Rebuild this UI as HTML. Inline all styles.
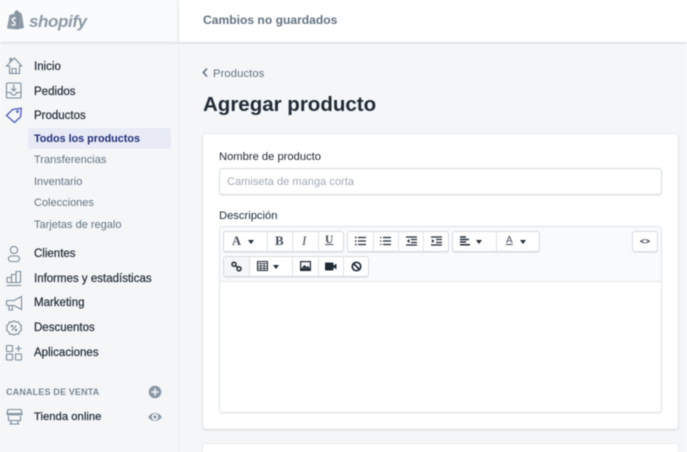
<!DOCTYPE html>
<html lang="es"><head><meta charset="utf-8"><style>
html,body{margin:0;padding:0;width:687px;height:452px;overflow:hidden}
#p{position:absolute;left:0;top:0;width:687px;height:452px;overflow:hidden;background:#f4f6f8;font-family:"Liberation Sans",sans-serif;color:#212b36;filter:blur(.4px)}
.t{position:absolute;white-space:nowrap;line-height:16px;font-size:11.500px;color:#212b36;-webkit-text-stroke:.2px currentColor}
.n{left:34px}
.s{left:34px;color:#637381;font-size:11px;letter-spacing:0;-webkit-text-stroke:0}
svg{position:absolute;fill:none;stroke:#7c8b99;stroke-width:1.100}
.box{position:absolute;background:#fff;box-sizing:border-box}
.g{position:absolute;background:#fff;border:1px solid #d5dbe1;border-radius:3px;box-sizing:border-box;height:21px;box-shadow:0 1px 0 #e3e6ea}
.d{position:absolute;top:0;bottom:0;width:1px;background:#dfe3e8}
.c{position:absolute;top:240px;width:0;height:0;border:3.500px solid transparent;border-top:4px solid #212b36;border-bottom:0}
</style></head><body><div id="p">

<div class="box" style="left:0;top:0;width:178px;height:42px;background:#fafbfc;box-shadow:0 1px 2px rgba(60,70,80,.18)"></div>
<div class="box" style="left:178px;top:0;width:509px;height:42px;box-shadow:0 1px 2px rgba(60,70,80,.18)"></div>
<div class="box" style="left:178px;top:0;width:1px;height:452px;background:#e9ecef"></div>

<svg style="left:6px;top:8px" width="20" height="24" viewBox="0 0 20 24"><path d="M1 20.500L3.500 7c3-1 3.500-1 4.500-1C9 2 11 1 12.500 3.500L15 5l1 2 2 13-7 1.500z" fill="#8d9aa6" stroke="none"/><path d="M11.500 4v17" stroke="#74838f" stroke-width=".7"/><path d="M10 10.500c-2-1-4 0-3.500 1.500S9.500 14 9 16s-2.500 1-3.500.5" stroke="#fafbfc" stroke-width="1.400"/></svg>
<div class="t" style="left:29px;top:12px;font-size:17px;line-height:20px;font-weight:700;font-style:italic;color:#8d9aa6;letter-spacing:-.4px;-webkit-text-stroke:0">shopify</div>
<div class="t" style="left:203px;top:12px;font-size:12.100px;color:#637381;font-weight:700;-webkit-text-stroke:0">Cambios no guardados</div>

<svg style="left:5px;top:57px" width="18" height="18" viewBox="0 0 18 18"><path d="M1.500 9L5 5.500V1.500h1.500v2.500L9.500 1l7 8h-2v7.500h-10V9z"/><path d="M7 16.500v-5h4v5"/></svg>
<svg style="left:5px;top:81px" width="18" height="18" viewBox="0 0 18 18"><rect x="1.500" y="2" width="14.500" height="15" rx="1"/><path d="M1.500 11.500H6c0 2 1.200 2.500 2.700 2.500s2.700-.5 2.700-2.500H16M8.700 3.500v6M6.200 7.500l2.500 2.500 2.500-2.500"/></svg>
<svg style="left:5px;top:106px" width="18" height="18" viewBox="0 0 18 18"><path d="M1.500 9.500L7.500 3.500 16.300 2.300 15.500 11 9.500 16.500z" stroke="#4f5dbd" stroke-width="1.300"/><circle cx="12.500" cy="5.500" r=".8" stroke="#4f5dbd"/></svg>
<svg style="left:6px;top:245px" width="16" height="18" viewBox="0 0 16 18"><circle cx="8" cy="5" r="3.600"/><rect x="2.500" y="11" width="11" height="5.500" rx="2.700"/></svg>
<svg style="left:5px;top:270px" width="18" height="17" viewBox="0 0 18 17"><path d="M2 12.500V7.500h4.500v5M6.500 12.500V4.500h4.500v8M11 12.500V1.500h4.500v11M2 12.500h13.500M1.500 15.500h14.500"/></svg>
<svg style="left:5px;top:295px" width="18" height="17" viewBox="0 0 18 17"><path d="M16.500 1.500v13L9 10.500H2.500a1 1 0 0 1-1-1v-3a1 1 0 0 1 1-1H9zM4 10.500v4.500h3.500l-.5-4.500"/></svg>
<svg style="left:5px;top:319px" width="18" height="18" viewBox="0 0 18 18"><path d="M9 1.800l2 1.300 2.500-.2 1 2.300 2 1.500-.7 2.300.7 2.300-2 1.500-1 2.300-2.500-.2-2 1.300-2-1.300-2.500.2-1-2.300-2-1.500.7-2.300-.7-2.300 2-1.500 1-2.300 2.500.2z"/><path d="M6.700 11.300l4.600-4.600"/><circle cx="7" cy="7" r=".7"/><circle cx="11" cy="11" r=".7"/></svg>
<svg style="left:5px;top:344px" width="18" height="17" viewBox="0 0 18 17"><rect x="1.500" y="1.500" width="6" height="6" rx=".5"/><rect x="1.500" y="10" width="6" height="6" rx=".5"/><rect x="10.500" y="10" width="6" height="6" rx=".5"/><path d="M13.500 1.500v6M10.500 4.500h6"/></svg>
<svg style="left:6px;top:408px" width="17" height="18" viewBox="0 0 17 18"><path d="M2 1.500h13l1 4H1zM1 5.500c0 2 3.500 2 3.750 0 .25 2 3.500 2 3.750 0 .25 2 3.500 2 3.750 0 .25 2 3.750 2 3.750 0M2.500 8v4.500h12V8M5 12.500v3M12 12.500v3M3.500 16h10"/></svg>

<div class="t n" style="top:59px">Inicio</div>
<div class="t n" style="top:83.500px">Pedidos</div>
<div class="t n" style="top:108px">Productos</div>
<div class="box" style="left:28px;top:128px;width:143px;height:21px;background:#e8ebf6;border-radius:3px"></div>
<div class="t n" style="top:131px;color:#202e78;font-weight:700;-webkit-text-stroke:0;font-size:10.800px">Todos los productos</div>
<div class="t s" style="top:152px">Transferencias</div>
<div class="t s" style="top:174px">Inventario</div>
<div class="t s" style="top:195px">Colecciones</div>
<div class="t s" style="top:217px">Tarjetas de regalo</div>
<div class="t n" style="top:246px">Clientes</div>
<div class="t n" style="top:271px">Informes y estadísticas</div>
<div class="t n" style="top:295px">Marketing</div>
<div class="t n" style="top:320px">Descuentos</div>
<div class="t n" style="top:345px">Aplicaciones</div>
<div class="t" style="left:6px;top:384px;font-size:9px;font-weight:700;color:#7b8794;letter-spacing:.16px;-webkit-text-stroke:0">CANALES DE VENTA</div>
<div class="t n" style="top:409px;font-size:11.300px">Tienda online</div>
<svg style="left:148px;top:385px" width="14" height="14" viewBox="0 0 14 14"><circle cx="7" cy="7" r="6.300" fill="#8c99a5" stroke="none"/><path d="M7 3.500v7M3.500 7h7" stroke="#f4f6f8" stroke-width="1.600"/></svg>
<svg style="left:148px;top:411px" width="14" height="12" viewBox="0 0 14 12"><path d="M.3 6C3 .8 11 .8 13.700 6 11 11.200 3 11.200.3 6z" fill="#8c99a5" stroke="none"/><circle cx="7" cy="6" r="3.300" fill="#f4f6f8" stroke="none"/><circle cx="7" cy="6" r="1.600" fill="#8c99a5" stroke="none"/></svg>

<svg style="left:201px;top:67px" width="8" height="11" viewBox="0 0 8 11"><path d="M6 1.500L2.300 5.500 6 9.500" stroke="#5d6b78" stroke-width="1.500"/></svg>
<div class="t" style="left:213px;top:65.500px;font-size:11.200px;color:#637381;letter-spacing:.12px;-webkit-text-stroke:0">Productos</div>
<div class="t" style="left:203px;top:92px;font-size:20.500px;line-height:26px;font-weight:700;color:#212b36;-webkit-text-stroke:0">Agregar producto</div>

<div class="box" style="left:203px;top:134px;width:475px;height:295px;border-radius:3px;box-shadow:0 0 0 1px rgba(63,63,68,.04),0 1px 2px rgba(63,63,68,.17)"></div>
<div class="box" style="left:203px;top:444px;width:475px;height:20px;border-radius:3px;box-shadow:0 0 0 1px rgba(63,63,68,.05)"></div>

<div class="t" style="left:219px;top:149px;font-size:11.200px;-webkit-text-stroke:0">Nombre de producto</div>
<div class="box" style="left:219px;top:168px;width:443px;height:27px;border:1px solid #d5dbe1;border-radius:3px;box-shadow:0 1px 0 rgba(0,0,0,.05)"></div>
<div class="t" style="left:227px;top:174px;font-size:11px;color:#a0abb6;letter-spacing:.05px;-webkit-text-stroke:0">Camiseta de manga corta</div>
<div class="t" style="left:219px;top:208px;font-size:11.200px;-webkit-text-stroke:0">Descripción</div>

<div class="box" style="left:219px;top:226px;width:443px;height:187px;border:1px solid #dfe3e8;border-radius:3px;box-shadow:0 1px 0 rgba(0,0,0,.05)"></div>
<div class="box" style="left:220px;top:227px;width:441px;height:55px;background:#f9fafb;border-bottom:1px solid #e3e6ea"></div>

<div class="g" style="left:223px;top:231px;width:121px"><div class="d" style="left:43px"></div><div class="d" style="left:68px"></div><div class="d" style="left:94px"></div></div>
<div class="g" style="left:347px;top:231px;width:102px"><div class="d" style="left:25px"></div><div class="d" style="left:50px"></div><div class="d" style="left:75px"></div></div>
<div class="g" style="left:452px;top:231px;width:88px"><div class="d" style="left:43px"></div></div>
<div class="g" style="left:632px;top:231px;width:26px"></div>
<div class="g" style="left:223px;top:256px;width:146px"><div class="d" style="left:25px"></div><div class="d" style="left:68px"></div><div class="d" style="left:94px"></div><div class="d" style="left:119px"></div><div style="position:absolute;left:0;top:0;width:25px;height:19px;background:#f4f6f8"></div></div>

<div class="t" style="left:232px;top:233px;font:700 12.500px/16px 'Liberation Serif',serif;color:#444f5a;-webkit-text-stroke:0">A</div>
<div class="c" style="left:248px"></div>
<div class="t" style="left:275px;top:233px;font:700 13px/16px 'Liberation Serif',serif;color:#444f5a;-webkit-text-stroke:0">B</div>
<div class="t" style="left:302px;top:233px;font:italic 13px/16px 'Liberation Serif',serif;color:#444f5a;-webkit-text-stroke:0">I</div>
<div class="t" style="left:325px;top:232px;font:700 11.500px/16px 'Liberation Serif',serif;color:#444f5a;text-decoration:underline;-webkit-text-stroke:0">U</div>

<svg style="left:355px;top:236px;stroke:#212b36" width="11" height="10" viewBox="0 0 11 10"><path d="M3 1.500h8M3 5h8M3 8.500h8" stroke-width="1.300"/><path d="M0 1.500h1.500M0 5h1.500M0 8.500h1.500" stroke-width="1.500"/></svg>
<svg style="left:380px;top:236px;stroke:#212b36" width="11" height="10" viewBox="0 0 11 10"><path d="M3 1.500h8M3 5h8M3 8.500h8" stroke-width="1.300"/><path d="M0 1.500h1.500M0 5h1.500M0 8.500h1.500" stroke-width="1"/></svg>
<svg style="left:406px;top:236px;stroke:#212b36" width="11" height="10" viewBox="0 0 11 10"><path d="M0 1h11M5 3.500h6M5 6.500h6M0 9h11" stroke-width="1.300"/><path d="M3.500 3L.8 5l2.700 2z" fill="#212b36" stroke="none"/></svg>
<svg style="left:431px;top:236px;stroke:#212b36" width="11" height="10" viewBox="0 0 11 10"><path d="M0 1h11M5 3.500h6M5 6.500h6M0 9h11" stroke-width="1.300"/><path d="M.8 3l2.700 2-2.700 2z" fill="#212b36" stroke="none"/></svg>
<svg style="left:460px;top:236px;stroke:#212b36" width="11" height="10" viewBox="0 0 11 10"><path d="M0 1h6M0 3.500h9M0 6h6M0 8.800h10" stroke-width="1.500"/></svg>
<div class="c" style="left:476px"></div>
<div class="t" style="left:506px;top:234px;font:10px/13px 'Liberation Sans',sans-serif;color:#444f5a;text-decoration:underline;-webkit-text-stroke:0">A</div>
<div class="c" style="left:520px"></div>
<div class="t" style="left:640px;top:233px;font:700 8.500px/16px 'Liberation Sans',sans-serif;color:#212b36;-webkit-text-stroke:0">&lt;&gt;</div>

<svg style="left:231px;top:261px;stroke:#212b36" width="11" height="11" viewBox="0 0 11 11"><circle cx="3" cy="3.200" r="2" stroke-width="1.500"/><circle cx="8" cy="7.800" r="2" stroke-width="1.500"/><path d="M4 4.500l3 2" stroke-width="1.500"/></svg>
<svg style="left:257px;top:261px;stroke:#212b36" width="11" height="10" viewBox="0 0 11 10"><rect x=".5" y=".5" width="10" height="9" stroke-width="1"/><path d="M0 2.500h11M.5 5h10M.5 7.300h10M3.800 2v7.500M7.200 2v7.500" stroke-width=".8"/></svg>
<div class="c" style="left:273px;top:265px"></div>
<svg style="left:300px;top:261px;stroke:none" width="11" height="10" viewBox="0 0 11 10"><rect width="11" height="10" fill="#212b36"/><rect x="1.200" y="1.200" width="8.600" height="6" fill="#f4f6f8"/><path d="M1.500 7l3-3 2 2 1.500-1 1.800 2z" fill="#212b36"/></svg>
<svg style="left:325px;top:262px;stroke:none" width="12" height="9" viewBox="0 0 12 9"><rect y="0.500" width="8.500" height="8" rx="1" fill="#212b36"/><path d="M8 4l3.500-2.500v6L8 5z" fill="#212b36"/></svg>
<svg style="left:351px;top:261px;stroke:#212b36" width="11" height="11" viewBox="0 0 11 11"><circle cx="5.500" cy="5.500" r="4.200" stroke-width="1.700"/><path d="M2.600 2.600l5.800 5.800" stroke-width="1.700"/></svg>
</div></body></html>
